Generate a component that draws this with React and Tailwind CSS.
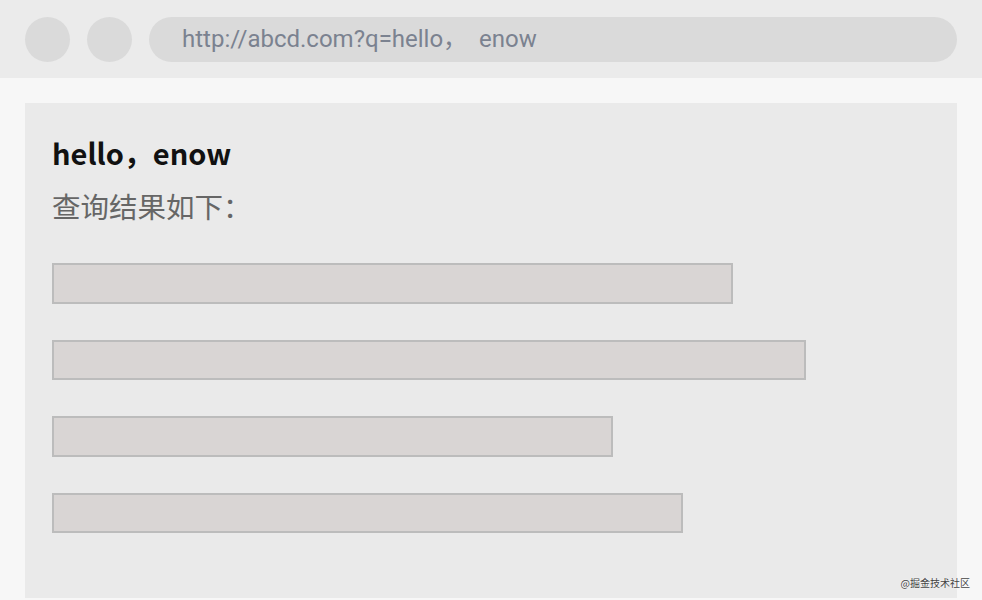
const bars = [681, 754, 561, 631]

function App() {
  return (
    <div className="relative h-[600px] w-[982px] overflow-hidden bg-[#f7f7f7]" style={{ fontFamily: '"Noto Sans", "Noto Sans CJK SC", sans-serif' }}>
      {/* browser chrome */}
      <div className="flex h-[78px] items-center gap-[17px] bg-[#ebebeb] px-[25px]">
        <div className="h-[45px] w-[45px] shrink-0 rounded-full bg-[#dadada]" />
        <div className="h-[45px] w-[45px] shrink-0 rounded-full bg-[#dadada]" />
        <div className="flex h-[45px] flex-1 items-center rounded-full bg-[#dadada] pl-[33px]">
          <span className="whitespace-pre text-[24px] text-[#7b8290]" style={{ fontFamily: 'Roboto, "Noto Sans CJK SC", sans-serif' }}>
            http://abcd.com?q=hello，  enow
          </span>
        </div>
      </div>

      {/* page */}
      <div className="mx-[25px] mt-[25px] h-[495px] bg-[#eaeaea] px-[27px] pt-[26px]">
        <h1 className="text-[29px] font-bold leading-[46px] text-[#111]" style={{ fontFamily: '"Noto Sans CJK SC", sans-serif' }}>
          hello，enow
        </h1>
        <p className="mt-[11px] text-[28.5px] leading-[40px] text-[#666]" style={{ fontFamily: '"Noto Sans CJK SC", sans-serif' }}>
          查询结果如下：
        </p>
        <div className="mt-[37px] flex flex-col gap-[36px]">
          {bars.map((w, i) => (
            <div key={i} className="h-[40.5px] border-2 border-[#bcbcbc] bg-[#d9d5d4]" style={{ width: w }} />
          ))}
        </div>
      </div>

      <span className="absolute bottom-[10px] right-[12px] text-[10px] text-[#444]" style={{ fontFamily: '"Noto Sans CJK SC", sans-serif', textShadow: '0 0 2px #fff' }}>
        @掘金技术社区
      </span>
    </div>
  )
}

export default App
